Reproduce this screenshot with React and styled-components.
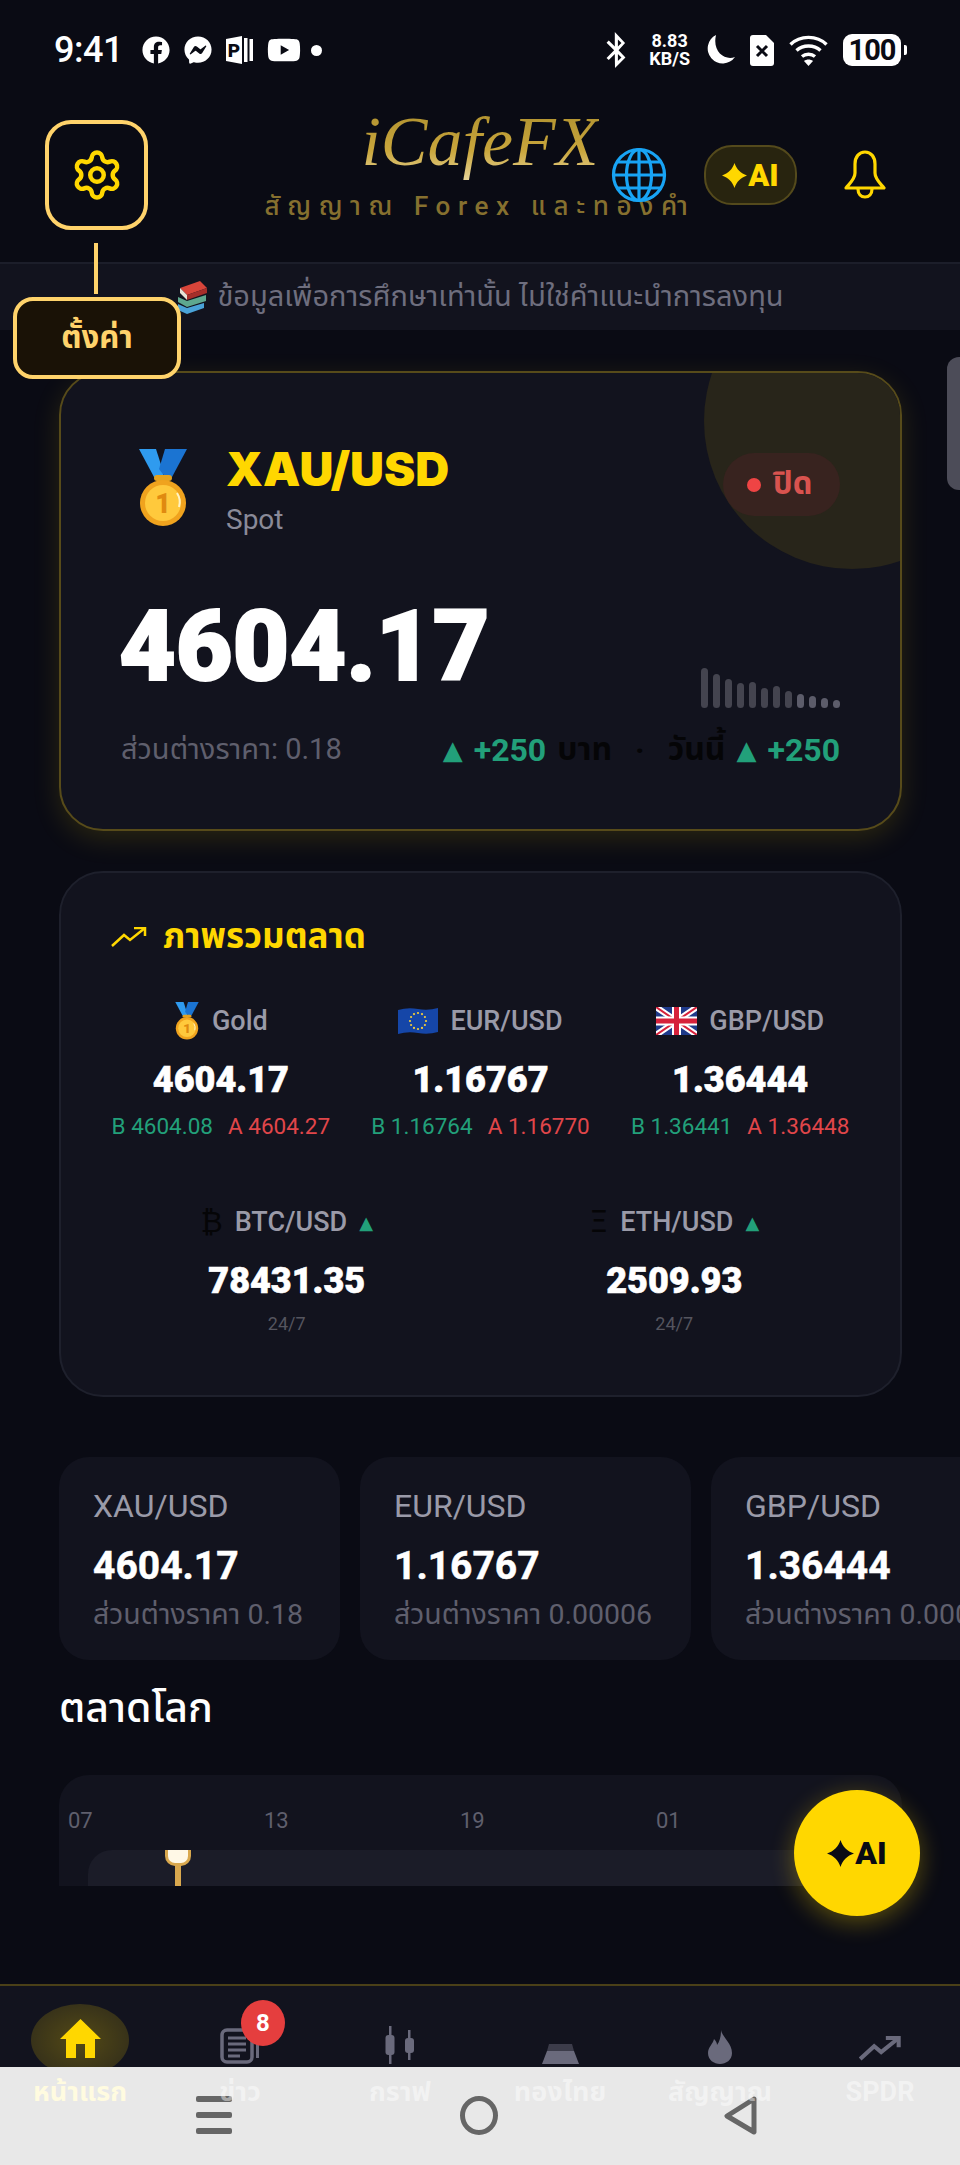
import React from "react";
import styled, { createGlobalStyle } from "styled-components";
import { Settings } from "lucide-react";
import { FaFacebook, FaFacebookMessenger, FaYoutube, FaBluetoothB } from "react-icons/fa";

const FONT = `Roboto, "Noto Sans Thai", "Noto Sans", "Liberation Sans", sans-serif`;

const Global = createGlobalStyle`
  html, body { margin: 0; padding: 0; background: #0a0b14; }
  * { box-sizing: border-box; }
  body { font-family: ${FONT}; }
`;

const Screen = styled.div`
  position: relative;
  width: 960px;
  height: 2165px;
  overflow: hidden;
  background: #0a0b14;
  color: #fff;
`;

/* ---------- status bar ---------- */
const StatusBar = styled.div`
  display: flex;
  align-items: center;
  justify-content: space-between;
  height: 100px;
  padding: 0 59px 0 54px;
`;
const StatusGroup = styled.div`
  display: flex;
  align-items: center;
  gap: ${(p) => p.$gap || 14}px;
`;
const Clock = styled.span`
  font-size: 36px;
  font-weight: 500;
  margin-right: 5px;
  letter-spacing: -0.5px;
`;
const Dot = styled.span`
  width: 11px;
  height: 11px;
  border-radius: 50%;
  background: #fff;
  margin-left: -4px;
`;
const Speed = styled.div`
  display: flex;
  flex-direction: column;
  align-items: center;
  font-size: 18px;
  line-height: 18px;
  font-weight: 700;
`;
const Battery = styled.div`
  position: relative;
  width: 58px;
  height: 32px;
  border-radius: 9px;
  background: #fff;
  color: #0a0b14;
  font-size: 29px;
  line-height: 32px;
  font-weight: 700;
  text-align: center;
  letter-spacing: -1px;
  &::after {
    content: "";
    position: absolute;
    right: -6px;
    top: 11px;
    width: 3px;
    height: 10px;
    border-radius: 0 2px 2px 0;
    background: #fff;
  }
`;

/* ---------- header ---------- */
const Header = styled.header`
  position: relative;
  display: flex;
  align-items: flex-start;
  justify-content: space-between;
  height: 162px;
  padding: 20px 74px 0 45px;
`;
const GearButton = styled.button`
  display: flex;
  align-items: center;
  justify-content: center;
  width: 103px;
  height: 110px;
  padding: 0;
  border: 4px solid #ffd36b;
  border-radius: 26px;
  background: #0a0b14;
  color: #ffd700;
`;
const Brand = styled.div`
  position: absolute;
  left: 0;
  right: 0;
  top: -2px;
  display: flex;
  flex-direction: column;
  align-items: center;
`;
const Logo = styled.div`
  font-family: "Liberation Serif", serif;
  font-style: italic;
  font-size: 70px;
  line-height: 88px;
  background: linear-gradient(180deg, #a88b2c 0%, #c9a63c 60%, #eeddaa 100%);
  -webkit-background-clip: text;
  background-clip: text;
  color: transparent;
`;
const Slogan = styled.div`
  margin-top: 5px;
  font-size: 26px;
  line-height: 30px;
  font-weight: 500;
  letter-spacing: 7.6px;
  color: #86702f;
  white-space: nowrap;
`;
const HeaderActions = styled.div`
  position: relative;
  display: flex;
  align-items: center;
  height: 60px;
  margin-top: 25px;
`;
const AiPill = styled.div`
  display: flex;
  align-items: center;
  justify-content: center;
  gap: 1px;
  width: 93px;
  height: 60px;
  margin: 0 47px 0 37px;
  border: 2px solid #544a1c;
  border-radius: 28px;
  background: #28240f;
  color: #ffd700;
  font-size: 31px;
  font-weight: 900;
`;
const BellBox = styled.div`
  display: flex;
  width: 42px;
  justify-content: center;
`;

/* ---------- notice ---------- */
const Notice = styled.div`
  display: flex;
  align-items: center;
  justify-content: center;
  gap: 9px;
  height: 68px;
  border-top: 2px solid #1c1e2a;
  background: #12131e;
  color: #6e6e7e;
  font-size: 29px;
`;

/* ---------- overlays: tooltip over content ---------- */
const Connector = styled.div`
  position: absolute;
  left: 94px;
  top: 243px;
  width: 4px;
  height: 51px;
  background: #ffd36b;
`;
const Tip = styled.div`
  position: absolute;
  left: 13px;
  top: 297px;
  z-index: 3;
  display: flex;
  align-items: center;
  justify-content: center;
  width: 168px;
  height: 82px;
  border: 4px solid #ffd36b;
  border-radius: 20px;
  background: #1a1206;
  color: #ffd36b;
  font-size: 31px;
  font-weight: 700;
`;
const EdgeHandle = styled.div`
  position: absolute;
  right: 0;
  top: 357px;
  width: 13px;
  height: 133px;
  border-radius: 12px 0 0 12px;
  background: #4c4c58;
`;

/* ---------- main ---------- */
const Main = styled.main`
  padding: 41px 58px 0 59px;
`;
const Hero = styled.section`
  position: relative;
  height: 460px;
  padding: 76px 60px 0 60px;
  overflow: hidden;
  border: 2px solid #574b1a;
  border-radius: 44px;
  background: #12131e;
  box-shadow: 0 8px 28px rgba(255, 215, 0, 0.13);
`;
const HeroCircle = styled.div`
  position: absolute;
  right: -100px;
  top: -100px;
  width: 296px;
  height: 296px;
  border-radius: 50%;
  background: #28251a;
`;
const HeroHead = styled.div`
  position: relative;
  display: flex;
  align-items: flex-start;
  height: 78px;
`;
const MedalBox = styled.div`
  display: flex;
  justify-content: center;
  width: 105px;
  padding-right: 21px;
`;
const HeroTitle = styled.div`
  flex: 1;
  display: flex;
  flex-direction: column;
`;
const Symbol = styled.div`
  font-family: Inter, Roboto, sans-serif;
  font-size: 47px;
  line-height: 40px;
  font-weight: 900;
  color: #ffd700;
`;
const Spot = styled.div`
  margin-top: 14px;
  font-size: 28px;
  line-height: 34px;
  color: #8a8a98;
`;
const ClosedBadge = styled.div`
  display: flex;
  align-items: center;
  gap: 12px;
  height: 63px;
  width: 117px;
  margin-top: 4px;
  padding-left: 24px;
  border-radius: 32px;
  background: #38231f;
  color: #d9534f;
  font-size: 31px;
  font-weight: 700;
  &::before {
    content: "";
    width: 14px;
    height: 14px;
    border-radius: 50%;
    background: #ef4444;
  }
`;
const PriceRow = styled.div`
  position: relative;
  display: flex;
  align-items: flex-end;
  justify-content: space-between;
  height: 111px;
  margin-top: 70px;
`;
const HeroPrice = styled.div`
  margin: 0 0 11px -2px;
  font-size: 98px;
  line-height: 100px;
  font-weight: 900;
  -webkit-text-stroke: 2px #fff;
`;
const Spark = styled.div`
  display: flex;
  align-items: flex-end;
  gap: 5px;
`;
const SparkBar = styled.i`
  display: block;
  width: 7px;
  height: ${(p) => p.$h}px;
  border-radius: 4px;
  background: ${(p) => (p.$h < 16 ? "#5c5c6a" : "#44444f")};
`;
const FootRow = styled.div`
  display: flex;
  align-items: center;
  justify-content: space-between;
  height: 40px;
  margin-top: 22px;
`;
const Spread = styled.span`
  font-size: 29px;
  color: #5f5f6d;
`;
const Change = styled.div`
  display: flex;
  align-items: center;
  gap: 11px;
  font-size: 32px;
  font-weight: 700;
`;
const Up = styled.span`
  color: #22a07a;
`;
const Arrow = styled.span`
  color: #22a07a;
  font-size: ${(p) => p.$size || 26}px;
  font-family: "DejaVu Sans", sans-serif;
`;
const Ink = styled.span`
  color: #050507;
  margin: ${(p) => p.$m || "0"};
`;

const Overview = styled.section`
  height: 526px;
  margin-top: 40px;
  padding: 44px 30px 0 30px;
  border: 2px solid #1e202c;
  border-radius: 44px;
  background: #12131e;
`;
const OverviewTitle = styled.h2`
  display: flex;
  align-items: center;
  gap: 16px;
  margin: 0 0 0 20px;
  height: 40px;
  font-size: 35px;
  font-weight: 700;
  color: #ffd700;
`;
const QuoteGrid = styled.div`
  display: grid;
  grid-template-columns: repeat(${(p) => p.$cols}, 1fr);
  margin-top: ${(p) => p.$mt}px;
  padding: ${(p) => (p.$cols === 2 ? "0 2px" : "0")};
`;
const Quote = styled.div`
  display: flex;
  flex-direction: column;
  align-items: center;
`;
const QuoteLabel = styled.div`
  display: flex;
  align-items: center;
  justify-content: center;
  gap: 12px;
  height: 40px;
  font-size: 27px;
  font-weight: 500;
  color: #9a9aa8;
`;
const QuotePrice = styled.div`
  margin-top: 19px;
  font-size: 36px;
  line-height: 40px;
  font-weight: 900;
  -webkit-text-stroke: 0.6px #fff;
`;
const BidAsk = styled.div`
  display: flex;
  gap: 15px;
  margin-top: 12px;
  font-size: 22.5px;
  line-height: 28px;
`;
const Bid = styled.span`
  color: #22a07a;
`;
const Ask = styled.span`
  color: #e0464a;
`;
const Glyph = styled.span`
  color: #050507;
  font-size: 30px;
  line-height: 40px;
  font-family: "DejaVu Sans", sans-serif;
`;
const Always = styled.div`
  margin-top: 11px;
  font-size: 18px;
  line-height: 24px;
  color: #55555f;
`;

const TickerRow = styled.div`
  display: flex;
  gap: 20px;
  width: 1000px;
  margin-top: 60px;
`;
const Ticker = styled.div`
  flex: none;
  width: ${(p) => p.$w}px;
  height: 203px;
  padding: 30px 0 0 34px;
  border-radius: 30px;
  background: #12131e;
  white-space: nowrap;
  overflow: hidden;
`;
const TickerLabel = styled.div`
  font-size: 32px;
  line-height: 38px;
  color: #9a9aa8;
`;
const TickerPrice = styled.div`
  margin-top: 19px;
  font-size: 39px;
  line-height: 44px;
  font-weight: 700;
  -webkit-text-stroke: 0.5px #fff;
`;
const TickerSub = styled.div`
  margin-top: 9px;
  font-size: 28.5px;
  line-height: 36px;
  color: #5f5f6d;
`;
const WorldTitle = styled.h2`
  margin: 23px 0 0 0;
  height: 50px;
  font-size: 41px;
  line-height: 50px;
  font-weight: 500;
`;
const WorldPanel = styled.div`
  height: 111px;
  margin-top: 42px;
  padding: 33px 0 0 0;
  overflow: hidden;
  border-radius: 30px 30px 0 0;
  background: #12131e;
`;
const Hours = styled.div`
  display: flex;
  height: 26px;
  padding-left: 9px;
  font-size: 22px;
  line-height: 26px;
  color: #5f5f6d;
`;
const Hour = styled.span`
  width: 196px;
`;
const Track = styled.div`
  position: relative;
  height: 60px;
  margin: 16px 18px 0 29px;
  border-radius: 24px;
  background: #1b1c28;
`;
const Marker = styled.div`
  position: absolute;
  left: 77px;
  top: 0;
  width: 20px;
  height: 40px;
  &::before {
    content: "";
    position: absolute;
    left: 0;
    top: 0;
    width: 20px;
    height: 13px;
    border: 3px solid #d9a84e;
    border-top: none;
    border-radius: 0 0 10px 10px;
    background: #fff8e6;
  }
  &::after {
    content: "";
    position: absolute;
    left: 10px;
    top: 13px;
    width: 6px;
    height: 27px;
    background: #d9a84e;
  }
`;
const Fab = styled.div`
  position: absolute;
  left: 794px;
  top: 1790px;
  z-index: 2;
  display: flex;
  align-items: center;
  justify-content: center;
  gap: 1px;
  width: 126px;
  height: 126px;
  border-radius: 50%;
  background: #ffd700;
  box-shadow: 0 6px 24px rgba(255, 215, 0, 0.33);
  color: #0a0b14;
  font-size: 32px;
  font-weight: 900;
`;

/* ---------- bottom nav ---------- */
const BottomNav = styled.nav`
  position: absolute;
  left: 0;
  right: 0;
  bottom: 0;
  display: grid;
  grid-template-columns: repeat(6, 160px);
  height: 181px;
  border-top: 2px solid #4a4018;
  background: #12131e;
`;
const NavItem = styled.div`
  position: relative;
  display: flex;
  flex-direction: column;
  align-items: center;
`;
const NavIcon = styled.div`
  position: relative;
  display: flex;
  align-items: flex-end;
  justify-content: center;
  height: 78px;
  padding-bottom: ${(p) => p.$lift || 0}px;
  color: #6a6a7c;
`;
const NavHalo = styled.div`
  position: absolute;
  left: 31px;
  top: 18px;
  width: 98px;
  height: 72px;
  border-radius: 50%;
  background: radial-gradient(ellipse at center, rgba(255, 215, 0, 0.28), rgba(255, 215, 0, 0.16) 70%, rgba(255, 215, 0, 0.08));
`;
const NavLabel = styled.span`
  position: relative;
  z-index: 2;
  margin-top: 10px;
  font-size: 27px;
  line-height: 36px;
  font-weight: 700;
  color: ${(p) => (p.$active ? "#fffbe0" : "rgba(255,255,255,0.45)")};
`;
const Badge = styled.span`
  position: absolute;
  left: 81px;
  top: 14px;
  display: flex;
  align-items: center;
  justify-content: center;
  width: 44px;
  height: 46px;
  border-radius: 50%;
  background: #e53e3e;
  color: #fff;
  font-size: 24px;
  font-weight: 700;
`;
const SystemBar = styled.div`
  position: absolute;
  left: 0;
  right: 0;
  bottom: 0;
  z-index: 1;
  display: flex;
  height: 98px;
  align-items: flex-start;
  background: #e8e8e8;
`;
const SysSlot = styled.div`
  display: flex;
  justify-content: center;
  width: ${(p) => p.$w}px;
  padding-top: 29px;
  margin-left: ${(p) => p.$ml || 0}px;
`;
const MenuLines = styled.div`
  display: flex;
  flex-direction: column;
  gap: 10px;
`;
const MenuLine = styled.i`
  display: block;
  width: 36px;
  height: 6px;
  border-radius: 2px;
  background: #666;
`;
const HomeRing = styled.div`
  width: 38px;
  height: 39px;
  border: 5px solid #666;
  border-radius: 50%;
`;

/* ---------- drawings ---------- */
const Star = ({ size }) => (
  <svg width={size} height={size} viewBox="0 0 24 24" fill="currentColor">
    <path d="M12 0C14 6 18 10 24 12C18 14 14 18 12 24C10 18 6 14 0 12C6 10 10 6 12 0Z" />
  </svg>
);

const Medal = ({ w, h }) => (
  <svg width={w} height={h} viewBox="0 0 48 78">
    <path d="M0 0H17L24 22L24 28H15Z" fill="#2f9bef" />
    <path d="M48 0H26L20 20L26 28H33Z" fill="#1b74d2" />
    <rect x="15" y="26" width="18" height="6" rx="3" fill="#e3a21f" />
    <circle cx="24" cy="54" r="23" fill="#f0a31e" />
    <circle cx="24" cy="54" r="18" fill="#ffc93c" />
    <text x="24" y="64" textAnchor="middle" fontSize="27" fontWeight="900" fontFamily="Roboto, sans-serif" fill="#e08a10">1</text>
    <path d="M38 44a17 17 0 0 1 2 14" stroke="#fff3c4" strokeWidth="2" fill="none" />
  </svg>
);

const EuFlag = () => (
  <svg width="40" height="28" viewBox="0 0 40 28">
    <path d="M0 3Q10 0 20 2T40 1V25Q30 28 20 26T0 27Z" fill="#1546a8" />
    {Array.from({ length: 12 }).map((_, i) => {
      const a = (i * Math.PI) / 6;
      return <circle key={i} cx={20 + 8 * Math.cos(a)} cy={14 + 8 * Math.sin(a)} r="1.1" fill="#f5cf3a" />;
    })}
  </svg>
);

const UkFlag = () => (
  <svg width="41" height="28" viewBox="0 0 41 28">
    <rect width="41" height="28" fill="#1f3a8a" />
    <path d="M0 0L41 28M41 0L0 28" stroke="#fff" strokeWidth="6" />
    <path d="M0 0L41 28M41 0L0 28" stroke="#d6213b" strokeWidth="2" />
    <path d="M20.5 0V28M0 14H41" stroke="#fff" strokeWidth="9" />
    <path d="M20.5 0V28M0 14H41" stroke="#d6213b" strokeWidth="5" />
  </svg>
);

const Books = () => (
  <svg width="32" height="34" viewBox="0 0 32 34">
    <path d="M4 8L24 1L31 8L11 15Z" fill="#d8453a" />
    <path d="M4 8L11 15V20L4 13Z" fill="#e9e3d6" />
    <path d="M11 15L31 8V13L11 20Z" fill="#a52e2a" />
    <path d="M2 17L11 21L30 15V21L11 27L2 22Z" fill="#5ea88f" />
    <path d="M2 24L11 28L28 23V28L11 34L2 30Z" fill="#4aa3d8" />
  </svg>
);

const Globe = () => (
  <svg width="56" height="56" viewBox="0 0 56 56" fill="none" stroke="#18a4f5" strokeWidth="3.2">
    <circle cx="28" cy="28" r="25.5" />
    <ellipse cx="28" cy="28" rx="12.5" ry="25.5" />
    <path d="M28 2.5V53.5M3 28H53M7 15H49M7 41H49" />
  </svg>
);

const Bell = () => (
  <svg width="42" height="50" viewBox="0 0 42 50" fill="none" stroke="#ffd700" strokeWidth="3.2" strokeLinejoin="round">
    <path d="M21 2C27 2 31 7 31 14V23C31 29 36 33 40 38H2C6 33 11 29 11 23V14C11 7 15 2 21 2Z" />
    <path d="M14 39C14 44 17 47 21 47C25 47 28 44 28 39" />
  </svg>
);

const Moon = () => (
  <svg width="30" height="30" viewBox="0 0 30 30" fill="#fff">
    <path d="M11 0A15 15 0 1 0 30 22C20 26 7 17 11 0Z" />
  </svg>
);

const Sim = () => (
  <svg width="24" height="31" viewBox="0 0 24 31">
    <path d="M3 0H16L24 8V28A3 3 0 0 1 21 31H3A3 3 0 0 1 0 28V3A3 3 0 0 1 3 0Z" fill="#fff" />
    <path d="M7 11L17 21M17 11L7 21" stroke="#0a0b14" strokeWidth="3" />
  </svg>
);

const Wifi = () => (
  <svg width="39" height="31" viewBox="0 0 39 31" fill="none" stroke="#fff" strokeWidth="3.4">
    <path d="M1.5 9.5C11 0 28 0 37.5 9.5" />
    <path d="M7.5 15.5C14 9.5 25 9.5 31.5 15.5" />
    <path d="M13 21.5C16.5 18.5 22.5 18.5 26 21.5" />
    <path d="M15 26L19.5 31L24 26C21.5 24 17.5 24 15 26Z" fill="#fff" stroke="none" />
  </svg>
);

const BookP = () => (
  <svg width="27" height="28" viewBox="0 0 27 28">
    <path d="M0 3L16 0V28L0 25Z" fill="#fff" />
    <rect x="18" y="2" width="3.5" height="24" fill="#fff" />
    <rect x="23.5" y="3" width="3.5" height="22" fill="#fff" />
    <text x="8" y="21" textAnchor="middle" fontSize="19" fontWeight="900" fontFamily="Roboto, sans-serif" fill="#0a0b14">P</text>
  </svg>
);

const TrendUp = ({ w, h, sw }) => (
  <svg width={w} height={h} viewBox="0 0 36 20" fill="none" stroke="currentColor" strokeWidth={sw} strokeLinejoin="miter">
    <path d="M1 19L13 8L19 13L34 1" />
    <path d="M23 1H34V9" />
  </svg>
);

const HomeIcon = () => (
  <svg width="41" height="39" viewBox="0 0 41 39" fill="#ffd700">
    <path d="M20.5 0L41 20H35V39H25V25H16V39H6V20H0Z" />
  </svg>
);
const NewsIcon = () => (
  <svg width="40" height="36" viewBox="0 0 40 36" fill="none" stroke="#6a6a7c">
    <rect x="2" y="2" width="30" height="32" rx="5" strokeWidth="3.5" />
    <path d="M8 10H26M8 16H26M8 22H26M8 28H20" strokeWidth="3" />
    <path d="M37.5 8V30" strokeWidth="3" />
  </svg>
);
const CandleIcon = () => (
  <svg width="30" height="38" viewBox="0 0 30 38" fill="#6a6a7c">
    <rect x="4" y="0" width="2.5" height="38" />
    <rect x="0.5" y="9" width="9" height="20" rx="3" />
    <rect x="23" y="4" width="2.5" height="30" />
    <rect x="20" y="12" width="9" height="15" rx="3" />
  </svg>
);
const BarIcon = () => (
  <svg width="37" height="20" viewBox="0 0 37 20">
    <path d="M7 0H30L32 7H5Z" fill="#3c3c4a" />
    <path d="M5 7H32L37 20H0Z" fill="#6a6a7c" />
  </svg>
);
const FireIcon = () => (
  <svg width="24" height="34" viewBox="0 0 24 34" fill="#6a6a7c">
    <path d="M13 0C14 7 24 13 24 23C24 30 18 34 12 34C6 34 0 30 0 23C0 17 5 14 6 9C8 11 9 13 9 15C12 11 13 6 13 0Z" />
  </svg>
);

const SPARK = [40, 34, 29, 25, 26, 20, 22, 17, 14, 12, 10, 8];

const QUOTES = [
  { key: "gold", icon: <Medal w={26} h={38} />, label: "Gold", price: "4604.17", bid: "4604.08", ask: "4604.27" },
  { key: "eur", icon: <EuFlag />, label: "EUR/USD", price: "1.16767", bid: "1.16764", ask: "1.16770" },
  { key: "gbp", icon: <UkFlag />, label: "GBP/USD", price: "1.36444", bid: "1.36441", ask: "1.36448" },
];
const CRYPTO = [
  { key: "btc", glyph: "₿", label: "BTC/USD", price: "78431.35" },
  { key: "eth", glyph: "Ξ", label: "ETH/USD", price: "2509.93" },
];
const TICKERS = [
  { label: "XAU/USD", price: "4604.17", sub: "ส่วนต่างราคา 0.18", w: 281 },
  { label: "EUR/USD", price: "1.16767", sub: "ส่วนต่างราคา 0.00006", w: 331 },
  { label: "GBP/USD", price: "1.36444", sub: "ส่วนต่างราคา 0.00007", w: 331 },
];
const NAV = [
  { label: "หน้าแรก", icon: <HomeIcon />, active: true, lift: 6 },
  { label: "ข่าว", icon: <NewsIcon />, badge: "8" },
  { label: "กราฟ", icon: <CandleIcon /> },
  { label: "ทองไทย", icon: <BarIcon /> },
  { label: "สัญญาณ", icon: <FireIcon /> },
  { label: "SPDR", icon: <TrendUp w={42} h={25} sw={3.5} />, lift: 3 },
];

export default function App() {
  return (
    <Screen>
      <Global />
      <StatusBar>
        <StatusGroup>
          <Clock>9:41</Clock>
          <FaFacebook size={28} />
          <FaFacebookMessenger size={28} />
          <BookP />
          <FaYoutube size={34} />
          <Dot />
        </StatusGroup>
        <StatusGroup $gap={15}>
          <FaBluetoothB size={36} />
          <Speed>
            <span>8.83</span>
            <span>KB/S</span>
          </Speed>
          <Moon />
          <Sim />
          <Wifi />
          <Battery>100</Battery>
        </StatusGroup>
      </StatusBar>

      <Header>
        <GearButton aria-label="ตั้งค่า">
          <Settings size={54} strokeWidth={2} />
        </GearButton>
        <Brand>
          <Logo>iCafeFX</Logo>
          <Slogan>สัญญาณ Forex และทองคำ</Slogan>
        </Brand>
        <HeaderActions>
          <Globe />
          <AiPill>
            <Star size={25} />
            AI
          </AiPill>
          <BellBox>
            <Bell />
          </BellBox>
        </HeaderActions>
      </Header>

      <Notice>
        <Books />
        ข้อมูลเพื่อการศึกษาเท่านั้น ไม่ใช่คำแนะนำการลงทุน
      </Notice>

      <Connector />
      <Tip>ตั้งค่า</Tip>
      <EdgeHandle />

      <Main>
        <Hero>
          <HeroCircle />
          <HeroHead>
            <MedalBox>
              <Medal w={48} h={78} />
            </MedalBox>
            <HeroTitle>
              <Symbol>XAU/USD</Symbol>
              <Spot>Spot</Spot>
            </HeroTitle>
            <ClosedBadge>ปิด</ClosedBadge>
          </HeroHead>
          <PriceRow>
            <HeroPrice>4604.17</HeroPrice>
            <Spark>
              {SPARK.map((h, i) => (
                <SparkBar key={i} $h={h} />
              ))}
            </Spark>
          </PriceRow>
          <FootRow>
            <Spread>ส่วนต่างราคา: 0.18</Spread>
            <Change>
              <Arrow>▲</Arrow>
              <Up>+250</Up>
              <Ink>บาท</Ink>
              <Ink $m="0 12px">·</Ink>
              <Ink>วันนี้</Ink>
              <Arrow>▲</Arrow>
              <Up>+250</Up>
            </Change>
          </FootRow>
        </Hero>

        <Overview>
          <OverviewTitle>
            <TrendUp w={36} h={20} sw={2.5} />
            ภาพรวมตลาด
          </OverviewTitle>
          <QuoteGrid $cols={3} $mt={44}>
            {QUOTES.map((q) => (
              <Quote key={q.key}>
                <QuoteLabel>
                  {q.icon}
                  {q.label}
                </QuoteLabel>
                <QuotePrice>{q.price}</QuotePrice>
                <BidAsk>
                  <Bid>B {q.bid}</Bid>
                  <Ask>A {q.ask}</Ask>
                </BidAsk>
              </Quote>
            ))}
          </QuoteGrid>
          <QuoteGrid $cols={2} $mt={62}>
            {CRYPTO.map((c) => (
              <Quote key={c.key}>
                <QuoteLabel>
                  <Glyph>{c.glyph}</Glyph>
                  {c.label}
                  <Arrow $size={18}>▲</Arrow>
                </QuoteLabel>
                <QuotePrice>{c.price}</QuotePrice>
                <Always>24/7</Always>
              </Quote>
            ))}
          </QuoteGrid>
        </Overview>

        <TickerRow>
          {TICKERS.map((t) => (
            <Ticker key={t.label} $w={t.w}>
              <TickerLabel>{t.label}</TickerLabel>
              <TickerPrice>{t.price}</TickerPrice>
              <TickerSub>{t.sub}</TickerSub>
            </Ticker>
          ))}
        </TickerRow>

        <WorldTitle>ตลาดโลก</WorldTitle>
        <WorldPanel>
          <Hours>
            <Hour>07</Hour>
            <Hour>13</Hour>
            <Hour>19</Hour>
            <Hour>01</Hour>
          </Hours>
          <Track>
            <Marker />
          </Track>
        </WorldPanel>
      </Main>

      <Fab>
        <Star size={27} />
        AI
      </Fab>

      <BottomNav>
        {NAV.map((n) => (
          <NavItem key={n.label}>
            {n.active && <NavHalo />}
            <NavIcon $lift={n.lift}>{n.icon}</NavIcon>
            {n.badge && <Badge>{n.badge}</Badge>}
            <NavLabel $active={n.active}>{n.label}</NavLabel>
          </NavItem>
        ))}
        <SystemBar>
          <SysSlot $w={36} $ml={196}>
            <MenuLines>
              <MenuLine />
              <MenuLine />
              <MenuLine />
            </MenuLines>
          </SysSlot>
          <SysSlot $w={38} $ml={228}>
            <HomeRing />
          </SysSlot>
          <SysSlot $w={33} $ml={226}>
            <svg width="33" height="39" viewBox="0 0 33 39" fill="none" stroke="#666" strokeWidth="5" strokeLinejoin="round">
              <path d="M30 3L3 20L30 36Z" />
            </svg>
          </SysSlot>
        </SystemBar>
      </BottomNav>
    </Screen>
  );
}
